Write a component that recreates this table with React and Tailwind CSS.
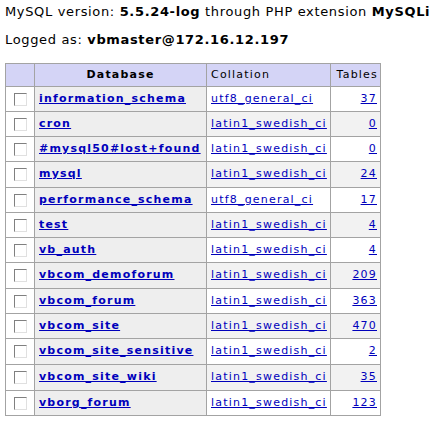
import React from "react";

// database list as shown on the server overview
const databases = [
  { name: "information_schema", collation: "utf8_general_ci", tables: 37 },
  { name: "cron", collation: "latin1_swedish_ci", tables: 0 },
  { name: "#mysql50#lost+found", collation: "latin1_swedish_ci", tables: 0 },
  { name: "mysql", collation: "latin1_swedish_ci", tables: 24, tall: true },
  { name: "performance_schema", collation: "utf8_general_ci", tables: 17 },
  { name: "test", collation: "latin1_swedish_ci", tables: 4 },
  { name: "vb_auth", collation: "latin1_swedish_ci", tables: 4 },
  { name: "vbcom_demoforum", collation: "latin1_swedish_ci", tables: 209, tall: true },
  { name: "vbcom_forum", collation: "latin1_swedish_ci", tables: 363 },
  { name: "vbcom_site", collation: "latin1_swedish_ci", tables: 470 },
  { name: "vbcom_site_sensitive", collation: "latin1_swedish_ci", tables: 2, tall: true },
  { name: "vbcom_site_wiki", collation: "latin1_swedish_ci", tables: 35, tall: true },
  { name: "vborg_forum", collation: "latin1_swedish_ci", tables: 123 },
];

function Checkbox() {
  return (
    <div className="w-[13px] h-[13px] bg-white border border-t-[#808080] border-l-[#808080] border-b-[#e0e0e0] border-r-[#e0e0e0] mx-auto" />
  );
}

export default function App() {
  return (
    <div className="min-h-screen bg-white text-black font-['DejaVu_Sans',Verdana,sans-serif] pl-[5px] pt-[4px]">
      <p className="text-[13px] leading-[16px] tracking-[0.65px]">
        MySQL version: <b>5.5.24-log</b> through PHP extension <b>MySQLi</b>
      </p>
      <p className="text-[13px] leading-[16px] tracking-[0.65px] mt-[12px]">
        Logged as: <b>vbmaster@172.16.12.197</b>
      </p>

      <table className="table-fixed border-collapse mt-[15px] text-[11px] tracking-[1.2px] w-[375px]">
        <colgroup>
          <col className="w-[29px]" />
          <col className="w-[172px]" />
          <col className="w-[124px]" />
          <col className="w-[50px]" />
        </colgroup>
        <thead>
          <tr className="bg-[#d4d4f6] h-[23px]">
            <th className="border border-[#a3a3a3]" />
            <th className="border border-[#a3a3a3] font-bold text-center">
              Database
            </th>
            <th className="border border-[#a3a3a3] font-normal text-left px-[4px]">
              Collation
            </th>
            <th className="border border-[#a3a3a3] font-normal text-right px-[2px] whitespace-nowrap">
              Tables
            </th>
          </tr>
        </thead>
        <tbody>
          {databases.map((db, i) => (
            <tr
              key={db.name}
              className={
                (i % 2 === 1 ? "bg-[#f2f2f2] " : "bg-white ") +
                (db.tall ? "h-[26px]" : "h-[25px]")
              }
            >
              <td className="border border-[#a3a3a3] bg-white">
                <Checkbox />
              </td>
              <td className="border border-[#a3a3a3] bg-[#eeeeee] px-[4px] whitespace-nowrap">
                <a href="#" className="font-bold text-[#0000bb] underline">
                  {db.name}
                </a>
              </td>
              <td className="border border-[#a3a3a3] px-[4px] whitespace-nowrap">
                <a href="#" className="text-[#0000bb] underline">
                  {db.collation}
                </a>
              </td>
              <td className="border border-[#a3a3a3] px-[3px] text-right">
                <a href="#" className="text-[#0000bb] underline">
                  {db.tables}
                </a>
              </td>
            </tr>
          ))}
        </tbody>
      </table>
    </div>
  );
}
